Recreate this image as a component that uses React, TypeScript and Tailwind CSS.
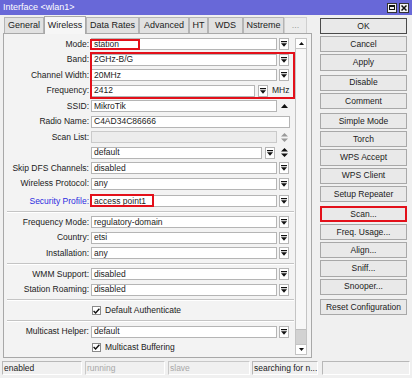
import React from "react";

const DropIcon = () => (
  <svg width="6" height="6" viewBox="0 0 6 6">
    <rect x="0" y="0" width="6" height="1.2" fill="#111" />
    <path d="M0 2.2h6L3 5.8z" fill="#111" />
  </svg>
);

const Drop = () => (
  <div className="w-[10px] h-[12px] border border-[#b5b5b5] bg-white flex items-center justify-center shrink-0">
    <DropIcon />
  </div>
);

const UpDown = ({ dim }: { dim?: boolean }) => (
  <svg width="7" height="9" viewBox="0 0 7 9">
    <path d="M3.5 0L7 3.6H0z M0 5.4h7L3.5 9z" fill={dim ? "#9a9a9a" : "#111"} />
  </svg>
);

const Up = () => (
  <svg width="7" height="5" viewBox="0 0 7 5">
    <path d="M3.5 0L7 4H0z" fill="#111" />
  </svg>
);

const Input = ({ w, value, dim }: { w: number; value?: string; dim?: boolean }) => (
  <div
    className={`h-[12px] border flex items-center pl-[2px] shrink-0 ${dim ? "bg-[#ececec] border-[#cacaca]" : "bg-white border-[#b5b5b5]"}`}
    style={{ width: w }}
  >
    {value}
  </div>
);

const Row = ({ label, blue, children, className = "" }: { label?: string; blue?: boolean; children: React.ReactNode; className?: string }) => (
  <div className={`flex items-center h-[15.5px] ${className}`}>
    <div className={`w-[85px] text-right whitespace-nowrap ${blue ? "text-[#2b2be0]" : ""}`}>{label ? `${label}:` : ""}</div>
    <div className="ml-[2px] flex items-center">{children}</div>
  </div>
);

const Combo = ({ label, value, blue }: { label: string; value: string; blue?: boolean }) => (
  <Row label={label} blue={blue}>
    <Input w={186} value={value} />
    <div className="ml-[2px]">
      <Drop />
    </div>
  </Row>
);

const Sep = () => (
  <div className="h-[5.5px] flex items-center pl-[3px] pr-[1px]">
    <div className="w-full border-t border-[#c4c4c4] border-b-white border-b" />
  </div>
);

const Check = ({ label }: { label: string }) => (
  <div className="flex items-center h-[15.5px] pl-[88px]">
    <div className="w-[9px] h-[9px] border border-[#8a8a8a] bg-white flex items-center justify-center">
      <svg width="7" height="6" viewBox="0 0 7 6">
        <path d="M0.6 3l2 2L6.4 0.8" stroke="#111" strokeWidth="1.4" fill="none" />
      </svg>
    </div>
    <span className="ml-[4px]">{label}</span>
  </div>
);

const Btn = ({ label, strong, red, className = "" }: { label: string; strong?: boolean; red?: boolean; className?: string }) => (
  <div
    className={`h-[16.2px] flex items-center justify-center bg-[#e9e9e9] whitespace-nowrap ${
      red ? "border-2 border-[#e3101a]" : strong ? "border border-[#4a4a4a]" : "border border-[#a8a8a8]"
    } ${className}`}
  >
    {label}
  </div>
);

const tabs = [
  { t: "General", w: 40 },
  { t: "Wireless", w: 42, active: true },
  { t: "Data Rates", w: 53 },
  { t: "Advanced", w: 50 },
  { t: "HT", w: 19 },
  { t: "WDS", w: 35 },
  { t: "Nstreme", w: 41 },
  { t: "...", w: 23, dim: true },
];

export default function App() {
  return (
    <div className="w-[412px] h-[378px] overflow-hidden bg-[#f0f0f0] text-[8.5px] leading-none text-[#1b1b1b] font-['Liberation_Sans',Arial,sans-serif]">
      {/* title bar */}
      <div className="h-[15px] bg-[#6868d8] flex items-center justify-between pl-[3px] pr-[3px] text-white text-[9px]">
        <span>{"Interface <wlan1>"}</span>
        <div className="flex gap-[2px]">
          <div className="w-[10px] h-[10px] bg-[#f2f2f2] border border-[#333] flex items-center justify-center">
            <div className="w-[6px] h-[5px] border border-[#111] border-t-2" />
          </div>
          <div className="w-[10px] h-[10px] bg-[#f2f2f2] border border-[#333] flex items-center justify-center">
            <svg width="6" height="6" viewBox="0 0 6 6">
              <path d="M0.5 0.5l5 5M5.5 0.5l-5 5" stroke="#111" strokeWidth="1.5" />
            </svg>
          </div>
        </div>
      </div>

      <div className="flex h-[345px]">
        {/* left: tabs and form */}
        <div className="ml-[3px] w-[309px] flex flex-col">
          <div className="h-[18px] flex items-end pl-[1px] text-[9px]">
            {tabs.map((tab) => (
              <div
                key={tab.t}
                style={{ width: tab.w }}
                className={`flex items-center justify-center whitespace-nowrap border-t border-l border-r ${
                  tab.active
                    ? "h-[18px] bg-[#f6f6f6] border-[#a8a8a8] relative z-10 -mb-[1px]"
                    : tab.dim
                    ? "h-[16px] bg-[#ececec] border-[#cfcfcf] text-[#9a9a9a]"
                    : "h-[16px] bg-[#e1e1e1] border-[#b4b4b4]"
                }`}
              >
                {tab.t}
              </div>
            ))}
          </div>

          <div className="h-[325px] border border-[#a8a8a8] bg-[#f3f3f3] flex">
            <div className="w-[291px] pt-[2.25px]">
              <Row label="Mode" className="relative">
                <Input w={186} value="station" />
                <div className="ml-[2px]">
                  <Drop />
                </div>
                <div className="absolute left-[86px] top-[2.5px] w-[50px] h-[11px] border-2 border-[#e3101a]" />
              </Row>
              <div className="relative">
                <Combo label="Band" value="2GHz-B/G" />
                <Combo label="Channel Width" value="20MHz" />
                <Row label="Frequency">
                  <Input w={164} value="2412" />
                  <div className="ml-[3px]">
                    <Drop />
                  </div>
                  <span className="ml-[4px]">MHz</span>
                </Row>
                <div className="absolute left-[86px] top-[0px] w-[205px] h-[47px] border-2 border-[#e3101a]" />
              </div>
              <Row label="SSID">
                <Input w={186} value="MikroTik" />
                <div className="ml-[4px]">
                  <Up />
                </div>
              </Row>
              <Row label="Radio Name">
                <Input w={199} value="C4AD34C86666" />
              </Row>
              <Row label="Scan List">
                <Input w={186} dim />
                <div className="ml-[4px] flex">
                  <UpDown dim />
                </div>
              </Row>
              <Row>
                <Input w={171} value="default" />
                <div className="ml-[3px]">
                  <Drop />
                </div>
                <div className="ml-[6px] flex">
                  <UpDown />
                </div>
              </Row>
              <Combo label="Skip DFS Channels" value="disabled" />
              <Combo label="Wireless Protocol" value="any" />
              <Row label="Security Profile" blue className="relative mt-[2px]">
                <Input w={186} value="access point1" />
                <div className="ml-[2px]">
                  <Drop />
                </div>
                <div className="absolute left-[86px] top-[0.75px] w-[64px] h-[12.5px] border-2 border-[#e3101a]" />
              </Row>
              <Sep />
              <Combo label="Frequency Mode" value="regulatory-domain" />
              <Combo label="Country" value="etsi" />
              <Combo label="Installation" value="any" />
              <Sep />
              <Combo label="WMM Support" value="disabled" />
              <Combo label="Station Roaming" value="disabled" />
              <Sep />
              <Check label="Default Authenticate" />
              <Sep />
              <Combo label="Multicast Helper" value="default" />
              <Check label="Multicast Buffering" />
            </div>

            {/* scrollbar */}
            <div className="mt-[4px] w-[12px] h-[317px] border border-[#c4c4c4] bg-[#f7f7f7] flex flex-col">
              <div className="h-[10px] bg-white border-b border-[#c4c4c4] flex items-center justify-center">
                <svg width="5" height="3" viewBox="0 0 5 3">
                  <path d="M2.5 0L5 3H0z" fill="#111" />
                </svg>
              </div>
              <div className="flex-1" />
              <div className="h-[15px] bg-[#d2d2d2] border-t border-[#bdbdbd]" />
              <div className="h-[10px] bg-white border-t border-[#c4c4c4] flex items-center justify-center">
                <svg width="5" height="3" viewBox="0 0 5 3">
                  <path d="M0 0h5L2.5 3z" fill="#111" />
                </svg>
              </div>
            </div>
          </div>
        </div>

        {/* right: buttons */}
        <div className="ml-[8px] w-[87px] pt-[3px] flex flex-col gap-[2px]">
          <Btn label="OK" strong />
          <Btn label="Cancel" />
          <Btn label="Apply" />
          <Btn label="Disable" className="mt-[2px]" />
          <Btn label="Comment" />
          <Btn label="Simple Mode" className="mt-[2px]" />
          <Btn label="Torch" />
          <Btn label="WPS Accept" />
          <Btn label="WPS Client" />
          <Btn label="Setup Repeater" />
          <Btn label="Scan..." red className="mt-[2px]" />
          <Btn label="Freq. Usage..." />
          <Btn label="Align..." />
          <Btn label="Sniff..." />
          <Btn label="Snooper..." />
          <Btn label="Reset Configuration" className="mt-[2px]" />
        </div>
      </div>

      {/* status bar */}
      <div className="mt-[1px] h-[14px] flex">
        <div className="ml-[2px] w-[80px] border border-[#b8b8b8] border-b-white border-r-white flex items-center pl-[1px]">enabled</div>
        <div className="ml-[3px] w-[80px] border border-[#c8c8c8] border-b-white border-r-white flex items-center pl-[1px] text-[#a8a8a8]">running</div>
        <div className="ml-[3px] w-[82px] border border-[#c8c8c8] border-b-white border-r-white flex items-center pl-[1px] text-[#a8a8a8]">slave</div>
        <div className="ml-[2px] w-[66px] border border-[#b8b8b8] border-b-white border-r-white flex items-center pl-[1px] whitespace-nowrap overflow-hidden">searching for n...</div>
        <div className="ml-[4px] w-[88px] border border-[#b8b8b8] border-b-white border-r-white" />
      </div>
    </div>
  );
}
